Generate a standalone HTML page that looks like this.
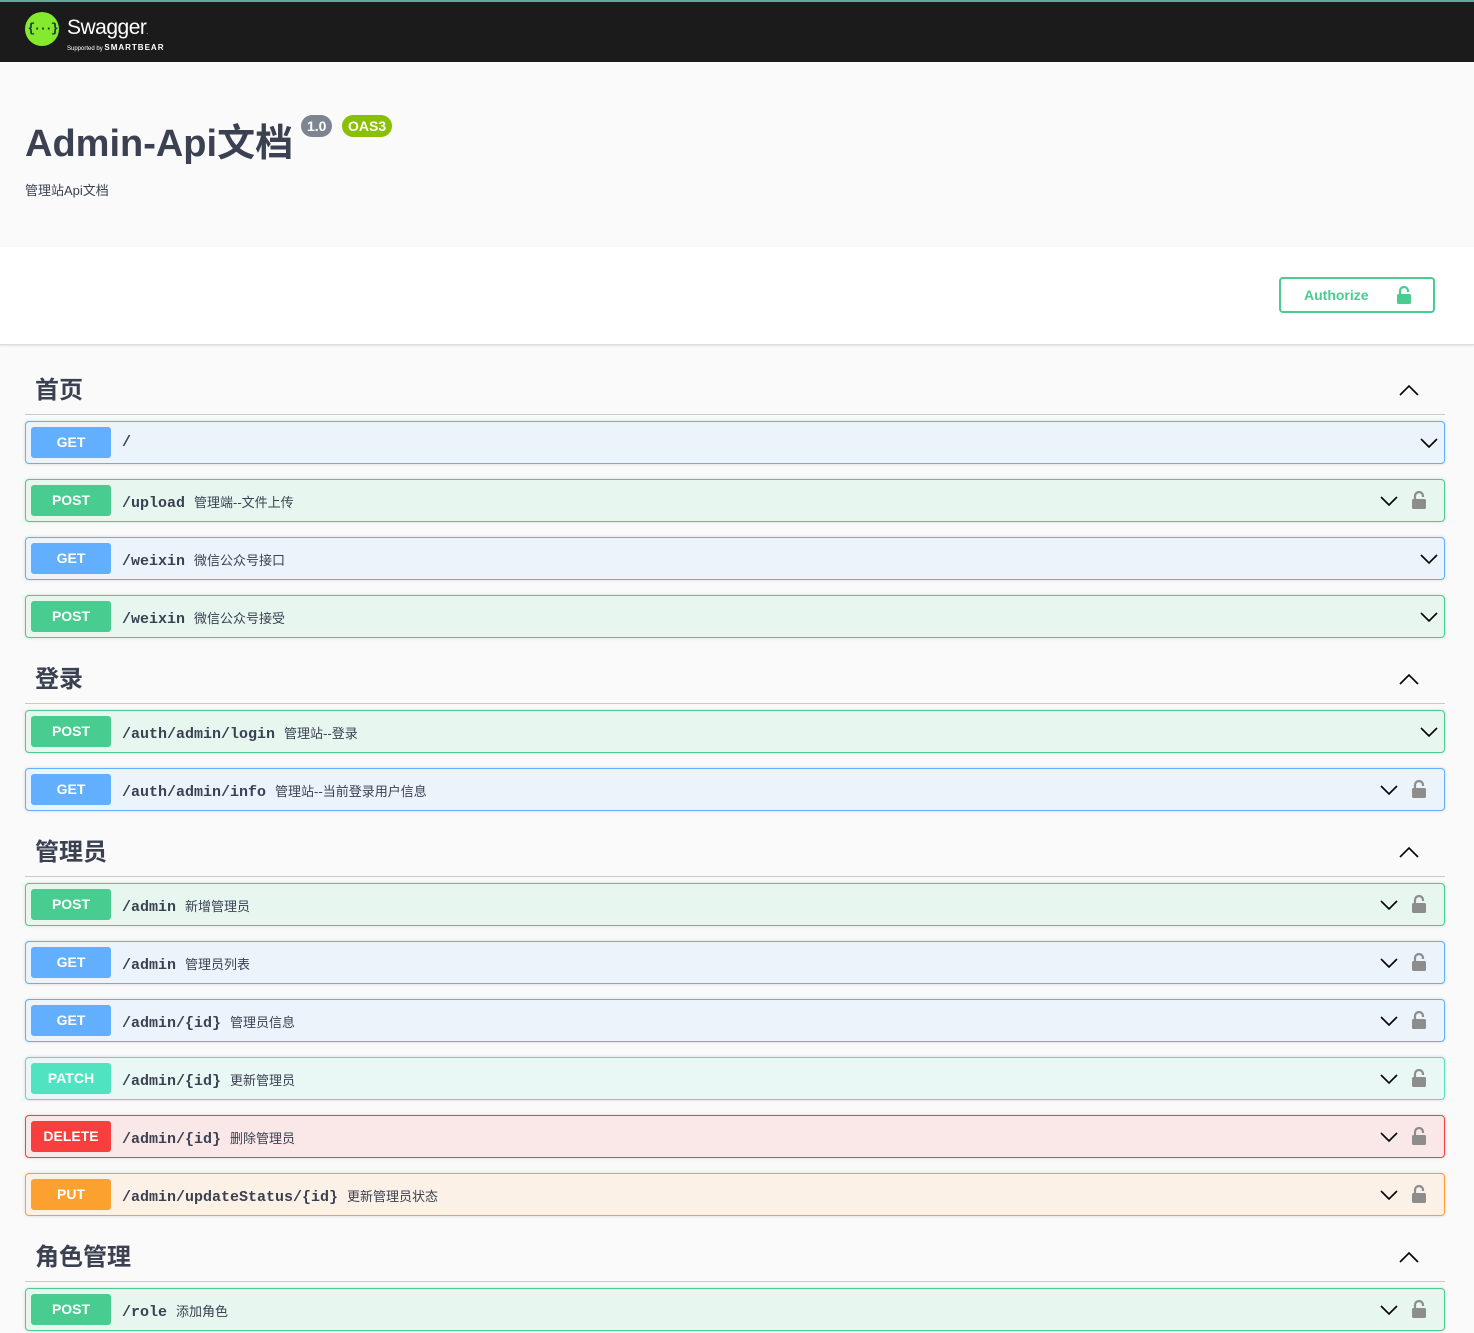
<!DOCTYPE html>
<html><head><meta charset="utf-8"><style>
*{box-sizing:border-box;margin:0;padding:0}
body{width:1474px;height:1333px;overflow:hidden;background:#fafafa;font-family:"Liberation Sans","Noto Sans CJK SC",sans-serif;color:#3b4151}
.top{height:62px;background:#1b1b1b;border-top:2px solid #62a89a;position:relative}
.logo{position:absolute;left:25px;top:10px;width:34px;height:34px;border-radius:50%;background:#85ea2d;color:#173647;font:bold 13px "Liberation Mono",monospace;text-align:center;line-height:34px;letter-spacing:-2px}
.sw{position:absolute;left:67px;top:14px;color:#fff;font-size:21px;letter-spacing:-0.5px}
.sb{position:absolute;left:67px;top:41px;color:#fff;font-size:6px}
.sb b{font-size:8px;letter-spacing:1px}
.info{height:185px;position:relative}
.info h1{position:absolute;left:25px;top:50px;font-size:38px;font-weight:bold}
.ver{position:absolute;top:53px;height:22px;border-radius:11px;color:#fff;font-weight:bold;font-size:14px;line-height:22px;padding:0 6px}
.desc{position:absolute;left:25px;top:118px;font-size:13px}
.auth{height:98px;background:#fff;border-bottom:1px solid #ddd;box-shadow:0 1px 2px rgba(0,0,0,.1);position:relative}
.abtn{position:absolute;left:1279px;top:30px;width:156px;height:36px;border:2px solid #49cc90;border-radius:4px;color:#49cc90;font-weight:bold;font-size:14px;line-height:32px;padding-left:23px}
.abtn svg{position:absolute;right:22px;top:7px}
.wrap{padding:0 29px 0 25px}
.tag{height:51px;border-bottom:1px solid #c9c9c9;position:relative;margin-bottom:6px}
.tag span{position:absolute;left:10px;bottom:9px;font-size:24px;font-weight:bold}
.tag svg{position:absolute;right:26px;bottom:18px}
.op{height:43px;margin:0 0 15px;border:1px solid;border-radius:4px;position:relative;box-shadow:0 0 3px rgba(0,0,0,.15)}
.op .m{position:absolute;left:5px;top:5px;width:80px;height:31px;border-radius:3px;color:#fff;font-weight:bold;font-size:14px;text-align:center;line-height:31px}
.op .p{position:absolute;left:96px;top:12px;font:bold 15px "Liberation Mono",monospace;color:#3b4151}
.op .p i{font:normal 13px "Liberation Sans","Noto Sans CJK SC",sans-serif;margin-left:9px;font-style:normal}
.op .c{position:absolute;top:16px}
.op .l{position:absolute;right:18px;top:11px}
.g{background:#ebf3fb;border-color:#61affe}.g .m{background:#61affe}
.po{background:#e8f6f0;border-color:#49cc90}.po .m{background:#49cc90}
.pa{background:#e9f8f4;border-color:#50e3c2}.pa .m{background:#50e3c2}
.d{background:#fae7e7;border-color:#f93e3e}.d .m{background:#f93e3e}
.pu{background:#fbf1e6;border-color:#fca130}.pu .m{background:#fca130}
</style></head><body>
<div class="top"><div class="logo">{···}</div><div class="sw">Swagger<span style="font-size:6px">.</span></div><div class="sb">Supported by <b>SMARTBEAR</b></div></div>
<div class="info"><h1>Admin-Api文档</h1><span class="ver" style="left:301px;background:#7d8492">1.0</span><span class="ver" style="left:342px;background:#89bf04">OAS3</span><div class="desc">管理站Api文档</div></div>
<div class="auth"><div class="abtn">Authorize<svg width="14" height="18" viewBox="0 0 14 18"><path d="M3 8V5a4 4 0 0 1 8 0V6" fill="none" stroke="#49cc90" stroke-width="2.2"/><rect x="0" y="8" width="14" height="10" rx="1.5" fill="#49cc90"/></svg></div></div>
<div class="wrap" id="w"></div>
<script>
var up='<svg width="20" height="12" viewBox="0 0 20 12"><path d="M1 11L10 2L19 11" fill="none" stroke="#000" stroke-width="1.6"/></svg>';
function dn(r){return '<svg class="c" style="right:'+r+'px" width="18" height="11" viewBox="0 0 18 11"><path d="M1 1L9 9L17 1" fill="none" stroke="#000" stroke-width="1.6"/></svg>'}
var lk='<svg class="l" width="14" height="18" viewBox="0 0 14 18"><path d="M3 8V5a4 4 0 0 1 8 0V6" fill="none" stroke="#8d8d8d" stroke-width="2.2"/><rect x="0" y="8" width="14" height="10" rx="1.5" fill="#8d8d8d"/></svg>';
var data=[["首页",[["g","GET","/","",0],["po","POST","/upload","管理端--文件上传",1],["g","GET","/weixin","微信公众号接口",0],["po","POST","/weixin","微信公众号接受",0]]],
["登录",[["po","POST","/auth/admin/login","管理站--登录",0],["g","GET","/auth/admin/info","管理站--当前登录用户信息",1]]],
["管理员",[["po","POST","/admin","新增管理员",1],["g","GET","/admin","管理员列表",1],["g","GET","/admin/{id}","管理员信息",1],["pa","PATCH","/admin/{id}","更新管理员",1],["d","DELETE","/admin/{id}","删除管理员",1],["pu","PUT","/admin/updateStatus/{id}","更新管理员状态",1]]],
["角色管理",[["po","POST","/role","添加角色",1]]]];
var h='';data.forEach(function(t,i){h+='<div class="tag" style="'+(i==0?'height:70px':'')+'"><span>'+t[0]+'</span>'+up+'</div>';t[1].forEach(function(o){h+='<div class="op '+o[0]+'"><div class="m">'+o[1]+'</div><div class="p">'+o[2]+(o[3]?'<i>'+o[3]+'</i>':'')+'</div>'+(o[4]?dn(46)+lk:dn(6))+'</div>'})});
document.getElementById('w').innerHTML=h;
</script>
</body></html>
